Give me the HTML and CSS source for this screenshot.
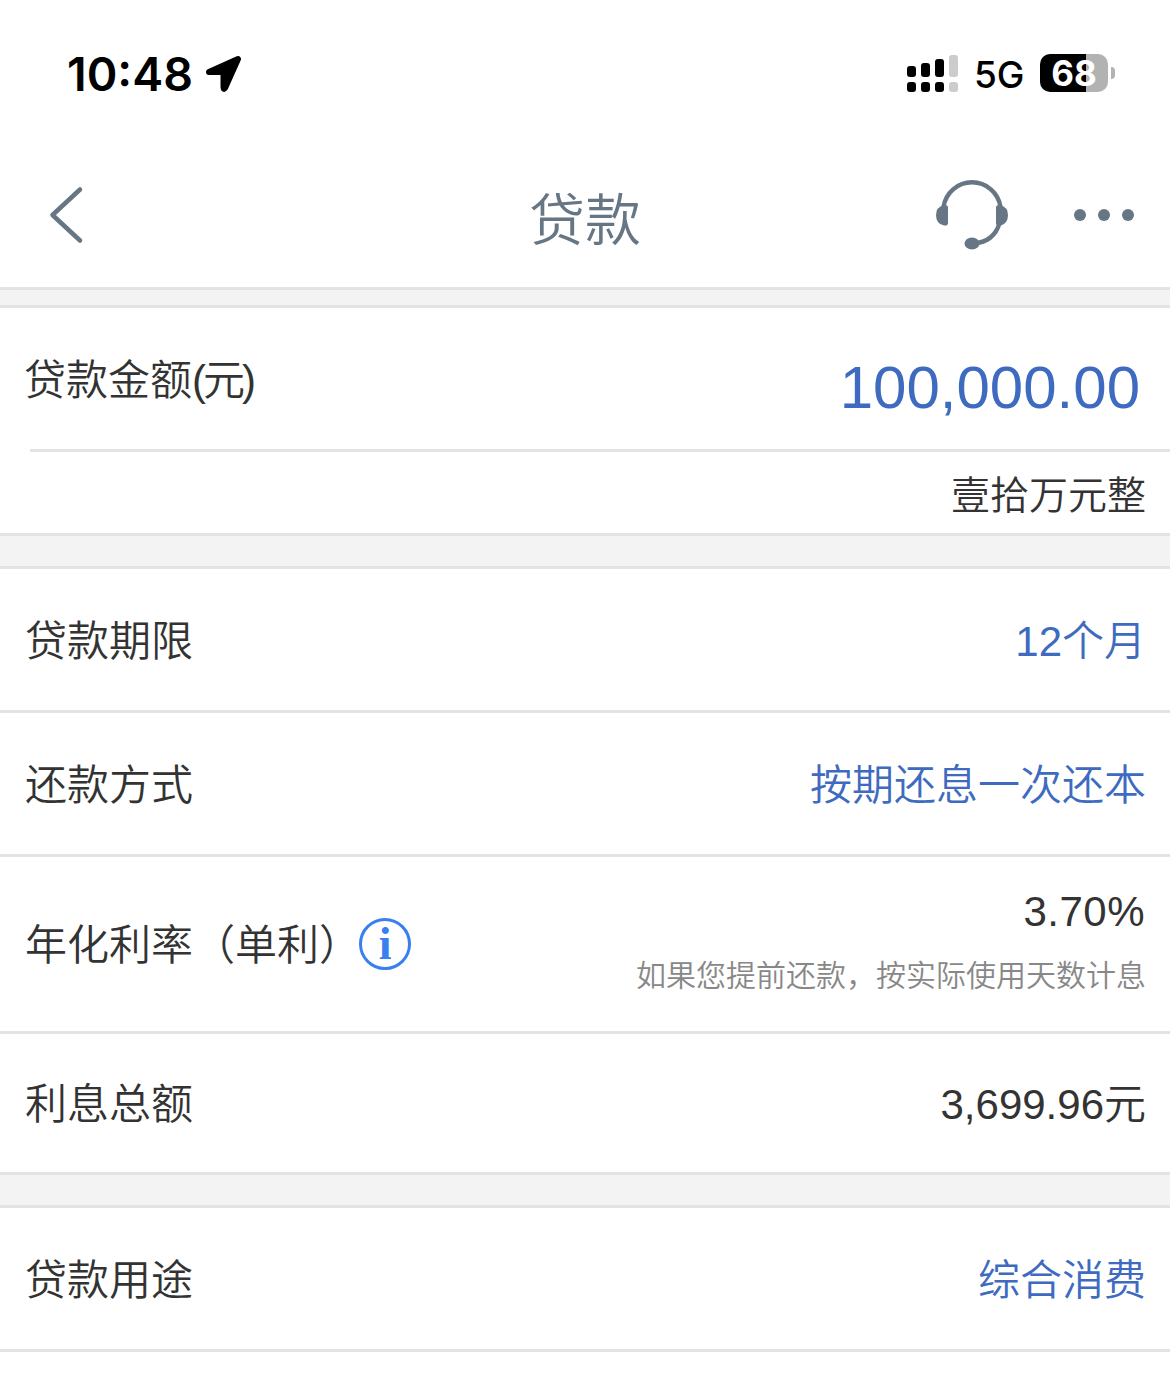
FILE: index.html
```html
<!DOCTYPE html>
<html lang="zh-CN">
<head>
    <meta charset="UTF-8">
    <meta name="viewport" content="width=device-width, initial-scale=1.0">
    <title>贷款</title>
    <link rel="stylesheet" href="styles.css">
</head>
<body>
    <div class="status-bar">
        <div class="status-left">
            <span class="time">10:48</span>
            <svg class="location" width="38" height="38" viewBox="0 0 38 38">
                <path d="M4 18 L33 5 L20 34 Q18.5 36 18.5 33 V18 Z" fill="#000" stroke="#000" stroke-width="6" stroke-linejoin="round"/>
            </svg>
        </div>
        <div class="status-right">
            <svg class="signal" width="52" height="38" viewBox="0 0 52 38">
                <rect x="0" y="12" width="9" height="11" rx="3"/>
                <rect x="14" y="9" width="9" height="14" rx="3"/>
                <rect x="28" y="5" width="9" height="18" rx="3"/>
                <rect x="42" y="1" width="9" height="22" rx="3" fill="#ccc"/>
                <rect x="0" y="28" width="9" height="10" rx="3"/>
                <rect x="14" y="28" width="9" height="10" rx="3"/>
                <rect x="28" y="28" width="9" height="10" rx="3"/>
                <rect x="42" y="28" width="9" height="10" rx="3" fill="#ccc"/>
            </svg>
            <span class="network">5G</span>
            <div class="battery">68</div>
            <div class="battery-cap"></div>
        </div>
    </div>

    <header>
        <svg class="back" width="36" height="60" viewBox="0 0 36 60">
            <path d="M32 4.5 L4.5 30 L32 55.5" fill="none" stroke="#667685" stroke-width="4.5" stroke-linecap="round" stroke-linejoin="round"/>
        </svg>
        <h1>贷款</h1>
        <div class="actions">
            <svg width="72" height="70" viewBox="0 0 72 70">
                <path d="M7.5 27 A28.8 28.8 0 0 1 64.5 27" fill="none" stroke="#667685" stroke-width="4.5"/>
                <path d="M12 27 Q12 25 8 25 Q0 27 0 35 Q0 44 8 45.5 Q12 46 12 43 Z" fill="#667685"/>
                <path d="M60 27 Q60 25 64 25 Q72 27 72 35 Q72 43 65 45.5 Q60 46 60 43 Z" fill="#667685"/>
                <path d="M63.5 43 C60 56 50 63 38 63" fill="none" stroke="#667685" stroke-width="4.5"/>
                <ellipse cx="36" cy="63.5" rx="7.5" ry="6" fill="#667685"/>
            </svg>
            <svg width="60" height="12" viewBox="0 0 60 12" fill="#667685">
                <circle cx="6" cy="6" r="6"/>
                <circle cx="30" cy="6" r="6"/>
                <circle cx="54" cy="6" r="6"/>
            </svg>
        </div>
    </header>

    <div class="section amount-section">
        <div class="row amount-row">
            <span class="label">贷款金额<span class="unit">(元)</span></span>
            <span class="amount">100,000.00</span>
        </div>
        <div class="amount-words">壹拾万元整</div>
    </div>

    <div class="section">
        <div class="row">
            <span class="label">贷款期限</span>
            <span class="value link">12个月</span>
        </div>
        <div class="row">
            <span class="label">还款方式</span>
            <span class="value link">按期还息一次还本</span>
        </div>
        <div class="row rate-row">
            <span class="label">年化利率（单利）</span>
            <span class="info">i</span>
            <div class="rate">
                <div class="percent">3.70%</div>
                <div class="note">如果您提前还款，按实际使用天数计息</div>
            </div>
        </div>
        <div class="row total-row">
            <span class="label">利息总额</span>
            <span class="value">3,699.96元</span>
        </div>
    </div>

    <div class="section last-section">
        <div class="row">
            <span class="label">贷款用途</span>
            <span class="value link">综合消费</span>
        </div>
    </div>
</body>
</html>
```

FILE: styles.css
```css
* {
    box-sizing: border-box;
}
body {
    display: flex;
    flex-direction: column;
    font-family: "Liberation Sans", "Noto Sans CJK SC", sans-serif;
    font-size: 42px;
    font-weight: 350;
    margin: 0;
    height: 1381px;
    background-color: #f3f3f3;
    color: #333;
}
.status-bar {
    display: flex;
    justify-content: space-between;
    height: 143px;
    padding: 54px 55px 0 67px;
    background-color: #fff;
    color: #000;
    font-family: Inter, sans-serif;
}
.status-left, .status-right {
    display: flex;
    align-items: center;
    height: 38px;
}
.time {
    padding-top: 1px;
    font-size: 46.5px;
    font-weight: 600;
    line-height: 38px;
}
.location {
    margin-left: 12px;
}
.network {
    width: 50px;
    margin: 4px 0 0 15px;
    font-size: 37px;
    font-weight: 500;
    line-height: 38px;
    white-space: nowrap;
}
.battery {
    width: 68px;
    height: 38px;
    margin-left: 16px;
    border-radius: 10px;
    background: linear-gradient(to right, #000 46px, #b2b2b2 46px);
    color: #fff;
    font-size: 35px;
    font-weight: 700;
    line-height: 38px;
    text-align: center;
}
.battery-cap {
    width: 4px;
    height: 12px;
    margin-left: 3px;
    border-radius: 0 4px 4px 0;
    background-color: #b2b2b2;
}
header {
    display: grid;
    grid-template-columns: 1fr auto 1fr;
    align-items: center;
    height: 147px;
    padding: 0 36px 1px 48px;
    border-bottom: 3px solid #e3e3e3;
    background-color: #fff;
    color: #667685;
}
h1 {
    margin: 13px 12px 0 0;
    font-size: 56px;
    font-weight: 350;
    line-height: 80px;
}
.actions {
    display: flex;
    align-items: center;
    justify-content: flex-end;
    gap: 66px;
}
.section {
    margin-top: 30px;
    border-top: 3px solid #e3e3e3;
    background-color: #fff;
}
.amount-section {
    margin-top: 15px;
    border-bottom: 3px solid #e3e3e3;
}
.last-section {
    flex: 1;
}
.row {
    display: flex;
    align-items: center;
    justify-content: space-between;
    height: 144px;
    padding: 5px 24px 0 25px;
    border-bottom: 3px solid #e3e3e3;
    line-height: 60px;
}
.amount-row {
    margin-left: 30px;
    padding: 5px 30px 0 0;
}
.amount-row .label {
    margin-left: -6px;
}
.unit {
    letter-spacing: -3px;
}
.amount {
    padding-top: 14px;
    color: #3e6bc0;
    font-size: 60px;
}
.amount-words {
    height: 81px;
    padding: 16px 24px 0 0;
    font-size: 39px;
    line-height: 56px;
    text-align: right;
}
.link {
    color: #3e6bc0;
}
.rate-row {
    height: 177px;
    padding-top: 3px;
}
.total-row {
    height: 141px;
    padding-top: 3px;
}
.info {
    width: 52px;
    height: 52px;
    margin: -3px auto 0 -2px;
    border: 3px solid #397fef;
    border-radius: 50%;
    color: #397fef;
    font-family: "Liberation Serif", serif;
    font-size: 46px;
    font-weight: 700;
    line-height: 46px;
    text-align: center;
}
.rate {
    text-align: right;
}
.percent {
    margin-top: -4px;
    margin-right: 1px;
    font-size: 42px;
    letter-spacing: 0.5px;
}
.note {
    margin-top: 4px;
    color: #888;
    font-size: 30px;
}
```
